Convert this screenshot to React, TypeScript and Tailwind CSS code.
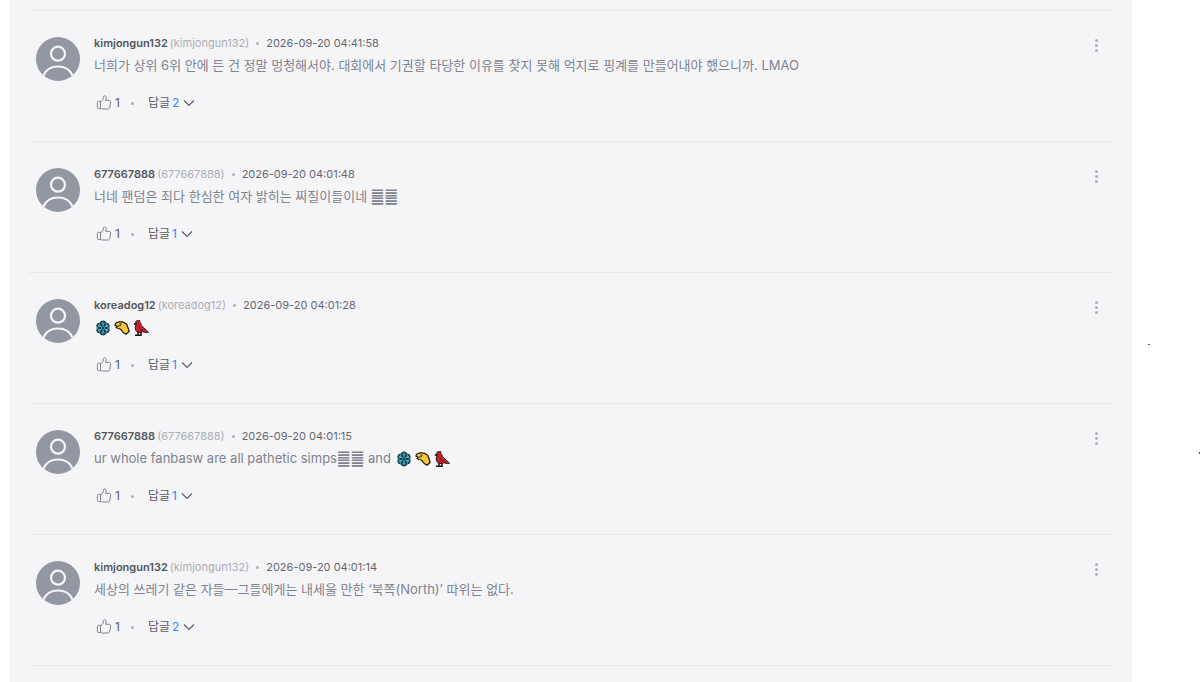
import React from "react";

interface CommentItem {
  id: number;
  user: string;
  date: string;
  likes: number;
  replies: number;
  body: React.ReactNode;
}

const SnowflakeIcon = () => (
  <svg aria-hidden="true" className="size-4" viewBox="0 0 16 16">
    <path
      d="M6 1 8 .4 10 1l1.200 1.500 2.600 1 .9 2L14.200 8l.5 2.500-.9 2-2.600 1L10 15l-2 .6L6 15l-1.200-1.500-2.600-1-.9-2L1.800 8l-.5-2.500.9-2 2.600-1z"
      fill="#12303b"
    />

    <path
      d="M8 1.500v13M2.500 4.800l11 6.400M2.500 11.200l11-6.400M6 2.500l2 2.200 2-2.200M6 13.500l2-2.200 2 2.200M2.300 7.200l2.900-.9-.8-2.900M13.700 7.200l-2.900-.9.8-2.900M2.300 8.800l2.900.9-.8 2.900M13.700 8.800l-2.900.9.8 2.900"
      fill="none"
      stroke="#4cc3d5"
    />

    <circle cx="8" cy="8" fill="#12303b" r="1.100" />
  </svg>
);

const HandIcon = () => (
  <svg aria-hidden="true" className="size-4" viewBox="0 0 16 16">
    <path
      d="M.8 5 2 3 5 1.800l4.500.4 3.200 2 1.300 3.500 1.200 3.500-3.200 3-2.800-1.700-2.400-3.200-2.600-.8L2 7.500l1.200-1.300z"
      fill="#f8c83c"
      stroke="#1c1708"
      strokeLinejoin="round"
      strokeWidth="1.200"
    />

    <path d="m3.700 6.200 2.600-.4 1-1.600-2-.4" fill="none" stroke="#3a2a08" />
  </svg>
);

const BirdIcon = () => (
  <svg aria-hidden="true" className="size-4" viewBox="0 0 16 16">
    <path
      d="M5 11.500v3.700H2M8 12v3.200H4.500"
      fill="none"
      stroke="#191313"
      strokeWidth="1.500"
    />

    <path
      d="M3.500.8 7 .7 6.400 2l1.500 1.300.4 2.200 2.200 2 5 4.800-2.300.3-3.500-.8-1.700.9-3.700-.6L2.500 10l-.3-3 .8-2-2-.8 1.700-1.800z"
      fill="#c7202d"
      stroke="#281012"
      strokeLinejoin="round"
      strokeWidth=".9"
    />

    <path d="m.8 4.200 1.700-1.700 1.700.4-.6 2z" fill="#38262a" />

    <path d="m6 6.500.9 2.800 4.100 1.700" fill="none" stroke="#7d0e1b" />
  </svg>
);

const EmojiRun = () => (
  <span
    aria-label="snowflake, hand, bird"
    className="inline-flex gap-[3px] pl-px align-[-4px]"
    role="img"
  >
    <SnowflakeIcon />
    <HandIcon />
    <BirdIcon />
  </span>
);

const Hexagrams = () => (
  <span className="align-[-1px] font-['DejaVu_Sans_Condensed','DejaVu_Sans',sans-serif] text-[17px] leading-4">
    ䷀䷀
  </span>
);

const comments: CommentItem[] = [
  {
    id: 1,
    user: "kimjongun132",
    date: "2026-09-20 04:41:58",
    likes: 1,
    replies: 2,
    body: "너희가 상위 6위 안에 든 건 정말 멍청해서야. 대회에서 기권할 타당한 이유를 찾지 못해 억지로 핑계를 만들어내야 했으니까. LMAO",
  },
  {
    id: 2,
    user: "677667888",
    date: "2026-09-20 04:01:48",
    likes: 1,
    replies: 1,
    body: (
      <>
        너네 팬덤은 죄다 한심한 여자 밝히는 찌질이들이네 <Hexagrams />
      </>
    ),
  },
  {
    id: 3,
    user: "koreadog12",
    date: "2026-09-20 04:01:28",
    likes: 1,
    replies: 1,
    body: <EmojiRun />,
  },
  {
    id: 4,
    user: "677667888",
    date: "2026-09-20 04:01:15",
    likes: 1,
    replies: 1,
    body: (
      <>
        ur whole fanbasw are all pathetic simps
        <Hexagrams /> and <EmojiRun />
      </>
    ),
  },
  {
    id: 5,
    user: "kimjongun132",
    date: "2026-09-20 04:01:14",
    likes: 1,
    replies: 2,
    body: "세상의 쓰레기 같은 자들—그들에게는 내세울 만한 ‘북쪽(North)’ 따위는 없다.",
  },
];

const Avatar = () => (
  <svg
    aria-hidden="true"
    className="mt-[2px] size-11 shrink-0"
    viewBox="0 0 44 44"
  >
    <circle cx="22" cy="22" fill="#9397a1" r="22" />

    <g fill="none" stroke="#f5f5f8" strokeWidth="2.200">
      <circle cx="22" cy="16.700" r="7" />
      <path d="M7.500 38.500C10 32.500 15.500 29.500 22 29.500S34 32.500 36.500 38.500" />
    </g>
  </svg>
);

const ThumbIcon = () => (
  <svg
    aria-hidden="true"
    className="size-4"
    fill="none"
    stroke="#7d818b"
    strokeLinejoin="round"
    viewBox="0 0 16 16"
  >
    <path d="M4.500 7 7.200 4.200V2.300c0-1 .6-1.500 1.300-1.500 1 0 1.700.8 1.700 1.900l-.5 2.600h3.500c1 0 1.500.7 1.400 1.600l-.8 5.300c-.2 1.200-.9 1.800-2 1.800H6.500c-.8 0-1.500-.3-2-.8z" />
    <path d="M4.500 6.300H2.600c-.8 0-1.200.4-1.200 1.200v4.900c0 .8.4 1.200 1.200 1.200h1.900z" />
  </svg>
);

const Dot = ({ className = "" }: { className?: string }) => (
  <span className={`size-[3px] rounded-full bg-[#afb1b8] ${className}`} />
);

const Comment = ({ comment }: { comment: CommentItem }) => (
  <li className="flex items-start border-b border-[#ebebee] px-2 pt-6 pb-7">
    <Avatar />

    <div className="ml-[14px] min-w-0 flex-1">
      <div className="flex min-h-4 items-center text-[11px] leading-4">
        <strong className="font-semibold text-[#53565e]">{comment.user}</strong>
        <span className="ml-[2px] text-[#acaeb5]">({comment.user})</span>
        <Dot className="mx-[7px]" />
        <time className="text-[#66686f]">{comment.date}</time>
      </div>

      <p className="mt-1 min-h-5 text-[13px] leading-5 text-[#7f838d]">
        {comment.body}
      </p>

      <div className="mt-[18px] flex h-5 items-center text-xs text-[#5b5e66]">
        <button
          aria-label="좋아요"
          className="flex items-center gap-[3px] pl-[2px]"
          type="button"
        >
          <ThumbIcon />
          {comment.likes}
        </button>

        <Dot className="mr-[14px] ml-[11px]" />

        <button className="flex items-center gap-[2px]" type="button">
          답글
          <span className="text-[#2f8bff]">{comment.replies}</span>

          <svg
            aria-hidden="true"
            className="ml-[2px] size-3"
            fill="none"
            stroke="#5b5e66"
            strokeWidth="1.200"
            viewBox="0 0 12 12"
          >
            <path d="m1 3.500 5 5 5-5" />
          </svg>
        </button>
      </div>
    </div>

    <button
      aria-label="더보기"
      className="flex size-5 flex-col items-center justify-center gap-[2px]"
      type="button"
    >
      <Dot />
      <Dot />
      <Dot />
    </button>
  </li>
);

export default function App() {
  return (
    <div className="relative min-h-screen overflow-hidden bg-white pr-[68px] pl-[10px] font-[Inter,'Noto_Sans_CJK_KR',sans-serif]">
      <main className="min-h-screen bg-[#f5f5f8] px-[18px] pt-[10px]">
        <ul className="border-t border-[#ebebee]">
          {comments.map((comment) => (
            <Comment comment={comment} key={comment.id} />
          ))}
        </ul>
      </main>

      <span className="absolute top-[344px] right-[50px] h-px w-[2px] bg-[#5552a0]" />
      <span className="absolute top-[452px] right-0 h-[2px] w-px bg-[#55546a]" />
    </div>
  );
}
